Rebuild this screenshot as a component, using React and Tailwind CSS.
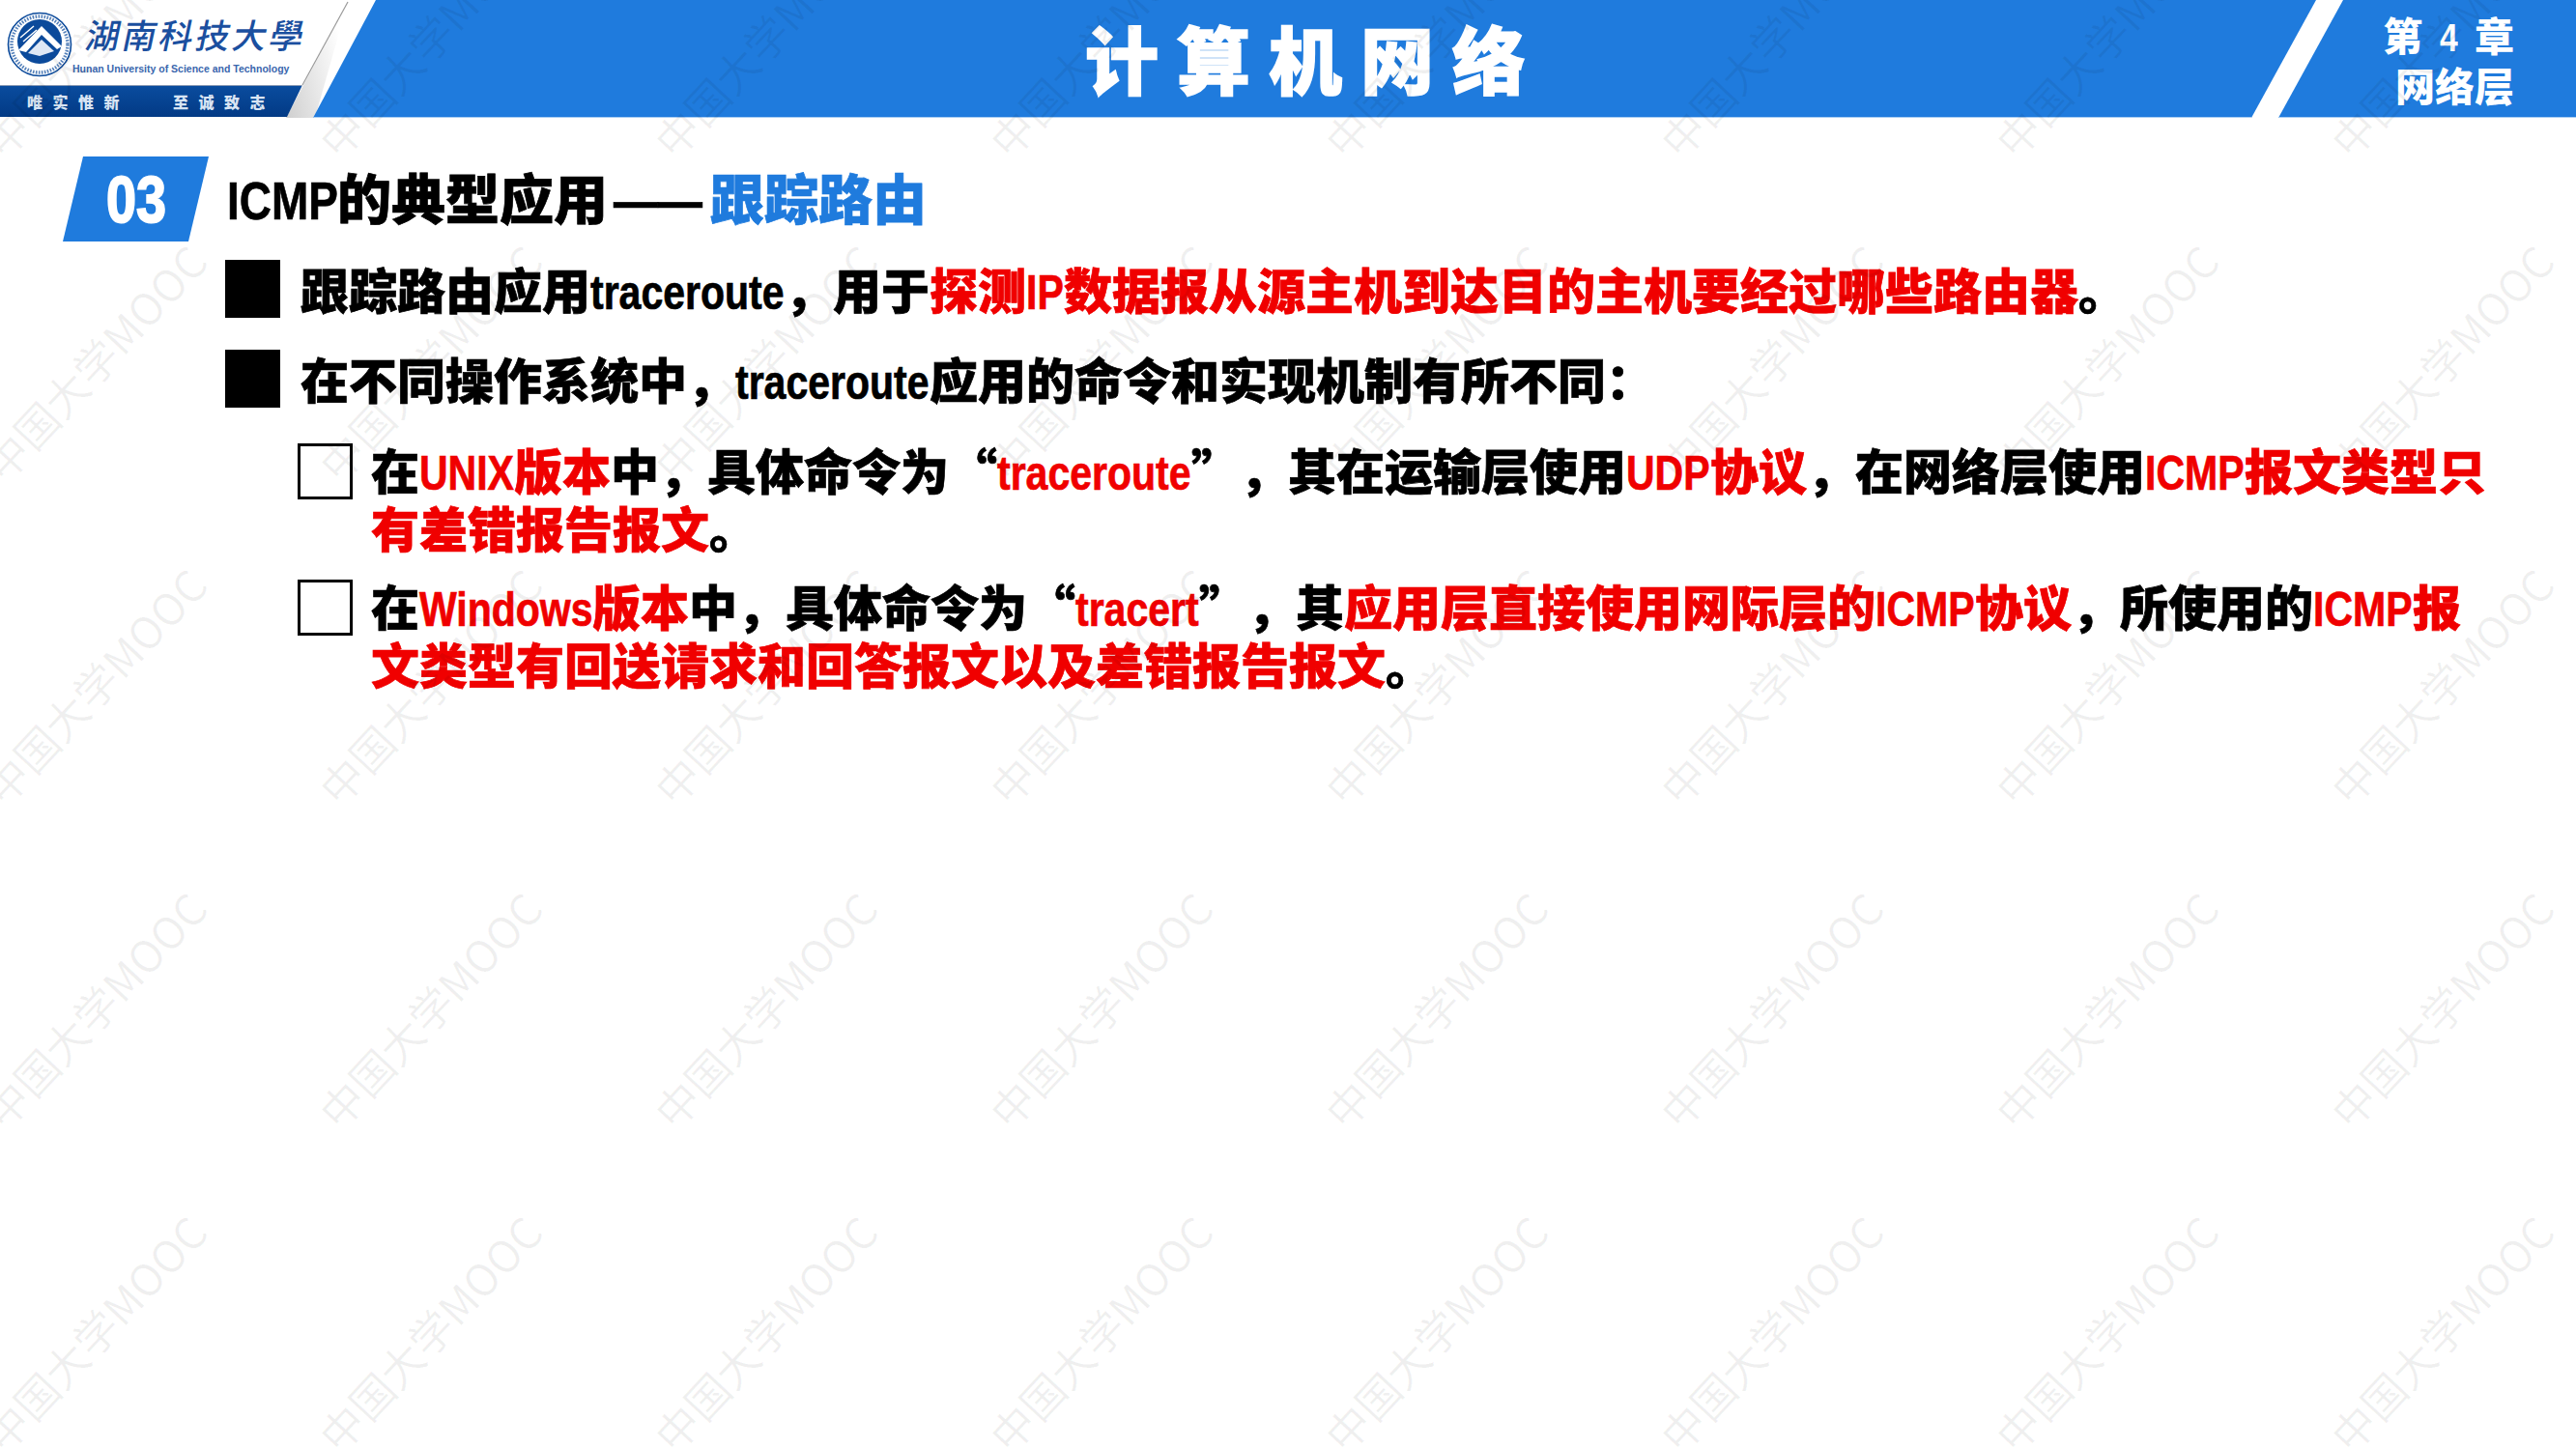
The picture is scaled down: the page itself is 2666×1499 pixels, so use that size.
const CJK = "font-['Noto_Sans_CJK_SC',sans-serif]";

// no narrow face installed, so latin runs are squeezed; w is the squeezed width
function L({ w, children }) {
  return (
    <span className={`inline-block leading-none whitespace-nowrap ${w}`}>
      <span className="inline-block origin-left scale-x-[.82] font-['Liberation_Sans',sans-serif] font-bold">{children}</span>
    </span>
  );
}

function R({ children }) {
  return <span className="text-[#f00000]">{children}</span>;
}

function Watermark() {
  const cells = Array.from({ length: 40 }, (_, i) => i);
  return (
    <div className="absolute left-[-13px] top-[-75px] grid grid-cols-[repeat(8,347px)] auto-rows-[335px] pointer-events-none">
      {cells.map((i) => (
        <div key={i} className="w-[220px] h-[230px] flex items-center justify-center">
          <span className="-rotate-[47deg] whitespace-nowrap text-[45px] font-['Noto_Sans_CJK_SC',sans-serif] font-normal text-black/[0.06]">
            中国大学MOOC
          </span>
        </div>
      ))}
    </div>
  );
}

function Seal() {
  return (
    <svg width="68" height="68" viewBox="0 0 68 68" className="shrink-0">
      <circle cx="34" cy="34" r="32.5" fill="#fff" stroke="#0b4a9b" strokeWidth="1.6" />
      <circle cx="34" cy="34" r="29" fill="none" stroke="#0b4a9b" strokeWidth="3.5" strokeDasharray="1.6 1.4" opacity="0.7" />
      <circle cx="34" cy="31" r="23" fill="#0b4a9b" />
      <path d="M12 40 L36 15 L57 36 L52 39 L36 24 L20 42 Z" fill="#fff" />
      <path d="M14 27 L28 15 M17 31 L31 19 M20 35 L33 23" stroke="#fff" strokeWidth="1.4" fill="none" />
      <path d="M22 43 L36 29 L49 41 L34 46 Z" fill="#dfe8f5" />
    </svg>
  );
}

function Logo() {
  return (
    <div className="relative w-[324px] h-full shrink-0 flex flex-col">
      <svg width="370" height="122" viewBox="0 0 370 122" className="absolute left-0 top-0">
        <defs>
          <linearGradient id="fold" x1="0" y1="1" x2="1" y2="0.6">
            <stop offset="0" stopColor="#cfcfcf" />
            <stop offset="1" stopColor="#ffffff" />
          </linearGradient>
        </defs>
        <polygon points="360,2 296,122 326,122" fill="url(#fold)" />
        <line x1="360" y1="2" x2="313" y2="88" stroke="#9a9a9a" strokeWidth="1.2" />
      </svg>
      <div className="relative h-[88px] flex items-start pl-[7px] pt-[12px]">
        <Seal />
        <div className="flex flex-col">
          <span className="ml-[15px] text-[35px] leading-[46px] tracking-[3px] -skew-x-12 font-['Noto_Sans_CJK_TC',sans-serif] font-medium text-[#1b4f9f] whitespace-nowrap">
            湖南科技大學
          </span>
          <span className="mt-[6px] text-[10.5px] leading-[14px] font-['Liberation_Sans',sans-serif] font-bold text-[#3a66ad] whitespace-nowrap">
            Hunan University of Science and Technology
          </span>
        </div>
      </div>
      <div className="relative h-[33px] w-[313px] border-t border-[#8b9bb5] bg-gradient-to-b from-[#0a4c9e] to-[#033a85] [clip-path:polygon(0_0,100%_0,calc(100%-16px)_100%,0_100%)] flex items-center pl-[28px] text-[16px] tracking-[10.5px] font-['Noto_Sans_CJK_SC',sans-serif] text-[#d8e4f3] whitespace-nowrap">
        <span>唯实惟新</span>
        <span className="ml-[45px]">至诚致志</span>
      </div>
    </div>
  );
}

function Header() {
  return (
    <header className="flex h-[122px] w-full">
      <Logo />
      <div className="flex-1 border-b border-[#a9cdf2] bg-[#1f7bdd] [clip-path:polygon(65px_0,100%_0,calc(100%-67px)_100%,0_100%)] flex items-center justify-center pb-[4px]">
        <h1 className="text-[76px] leading-none tracking-[19px] font-black text-white whitespace-nowrap [-webkit-text-stroke:1.5px_#fff]">计算机网络</h1>
      </div>
      <div className="w-[308px] -ml-[39px] shrink-0 border-b border-[#a9cdf2] bg-[#1f7bdd] [clip-path:polygon(67px_0,100%_0,100%_100%,0_100%)] flex flex-col items-end justify-center pr-[64px] text-[41px] leading-[52px] font-black text-white whitespace-nowrap">
        <div>第 <span className="mx-[8px]"><L w="w-[19px]">4</L></span> 章</div>
        <div>网络层</div>
      </div>
    </header>
  );
}

function Bullet({ children }) {
  return (
    <div className="flex items-center h-[60px]">
      <div className="w-[57px] h-[60px] bg-black shrink-0" />
      <p className="ml-[21px] -mt-[3px] whitespace-nowrap">{children}</p>
    </div>
  );
}

function SubItem({ children }) {
  return (
    <div className="flex">
      <div className="mt-[4px] w-[57px] h-[58px] border-[3px] border-black bg-white shrink-0" />
      <p className="ml-[19px] whitespace-nowrap">{children}</p>
    </div>
  );
}

export default function App() {
  return (
    <div lang="zh-CN" className={`relative w-[2666px] h-[1499px] bg-white overflow-hidden ${CJK} font-black text-black [text-spacing-trim:space-all]`}>
      <Header />

      <main className="pl-[65px]">
        <div className="flex items-center mt-[40px]">
          <div className="w-[151px] h-[88px] bg-[#1f7bdd] [clip-path:polygon(21px_0,100%_0,130px_100%,0_100%)] flex items-center justify-center pb-[6px]">
            <span className="text-[68px] leading-none text-white [-webkit-text-stroke:2px_#fff]">
              <L w="w-[62px]">03</L>
            </span>
          </div>
          <h2 className="ml-[19px] -mt-[6px] text-[56px] leading-[70px] whitespace-nowrap [-webkit-text-stroke-width:0.7px]">
            <L w="w-[114px]">ICMP</L>的典型应用
            <span className="ml-[6px]"><L w="w-[92px]">——</L></span>
            <span className="ml-[8px] text-[#1f7bdd]">跟踪路由</span>
          </h2>
        </div>

        <div className="ml-[168px] mt-[19px] text-[50px] leading-[60px] [-webkit-text-stroke-width:0.7px]">
          <Bullet>
            跟踪路由应用<L w="w-[201px]">traceroute</L>，用于
            <R>探测<L w="w-[39px]">IP</L>数据报从源主机到达目的主机要经过哪些路由器</R>。
          </Bullet>
          <div className="mt-[33px]">
            <Bullet>
              在不同操作系统中，<L w="w-[201px]">traceroute</L>应用的命令和实现机制有所不同：
            </Bullet>
          </div>

          <div className="ml-[75px] mt-[33px]">
            <SubItem>
              在<R><L w="w-[98px]">UNIX</L>版本</R>中，具体命令为“<R><L w="w-[201px]">traceroute</L></R>”，其在运输层使用<R><L w="w-[87px]">UDP</L>协议</R>，在网络层使用<R><L w="w-[103px]">ICMP</L>报文类型只</R>
              <br />
              <R>有差错报告报文</R>。
            </SubItem>
            <div className="mt-[21px]">
              <SubItem>
                在<R><L w="w-[179px]">Windows</L>版本</R>中，具体命令为“<R><L w="w-[128px]">tracert</L></R>”，其<R>应用层直接使用网际层的<L w="w-[103px]">ICMP</L>协议</R>，所使用的<R><L w="w-[103px]">ICMP</L>报</R>
                <br />
                <R>文类型有回送请求和回答报文以及差错报告报文</R>。
              </SubItem>
            </div>
          </div>
        </div>
      </main>

      <Watermark />
    </div>
  );
}
